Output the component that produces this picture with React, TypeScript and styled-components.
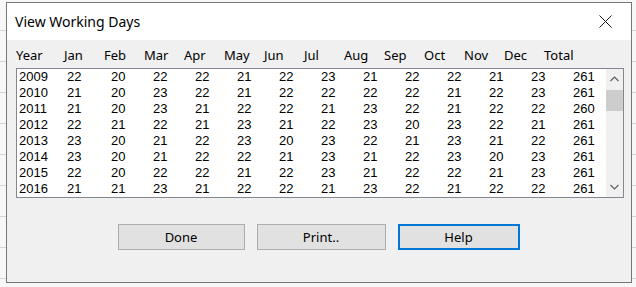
import styled, { createGlobalStyle } from "styled-components"

const GlobalStyle = createGlobalStyle`
  body {
    margin: 0;
    background: #ffffff;
    overflow: hidden;
  }
`

const years = [
  { year: 2009, days: [22, 20, 22, 22, 21, 22, 23, 21, 22, 22, 21, 23], total: 261 },
  { year: 2010, days: [21, 20, 23, 22, 21, 22, 22, 22, 22, 21, 22, 23], total: 261 },
  { year: 2011, days: [21, 20, 23, 21, 22, 22, 21, 23, 22, 21, 22, 22], total: 260 },
  { year: 2012, days: [22, 21, 22, 21, 23, 21, 22, 23, 20, 23, 22, 21], total: 261 },
  { year: 2013, days: [23, 20, 21, 22, 23, 20, 23, 22, 21, 23, 21, 22], total: 261 },
  { year: 2014, days: [23, 20, 21, 22, 22, 21, 23, 21, 22, 23, 20, 23], total: 261 },
  { year: 2015, days: [22, 20, 22, 22, 21, 22, 23, 21, 22, 22, 21, 23], total: 261 },
  { year: 2016, days: [21, 21, 23, 21, 22, 22, 21, 23, 22, 21, 22, 22], total: 261 },
]

const heads = ["Year", "Jan", "Feb", "Mar", "Apr", "May", "Jun", "Jul", "Aug", "Sep", "Oct", "Nov", "Dec", "Total"]

const App = () => {
  return (
    <>
      <GlobalStyle />
      <Backdrop>
        <Dialog>
          <TitleBar>
            <Title>View Working Days</Title>
            <CloseButton>
              <svg width="13" height="13" viewBox="0 0 13 13">
                <path d="M0.5 0.5 L12.5 12.5 M12.5 0.5 L0.5 12.5" stroke="#1a1a1a" strokeWidth="1" fill="none" />
              </svg>
            </CloseButton>
          </TitleBar>
          <Body>
            <HeaderRow>
              {heads.map((h) => <span key={h}>{h}</span>)}
            </HeaderRow>
            <ListBox>
              <Rows>
                {years.map((r) => (
                  <Row key={r.year}>
                    <span>{r.year}</span>
                    {r.days.map((d, i) => <span key={i}>{d}</span>)}
                    <span>{r.total}</span>
                  </Row>
                ))}
              </Rows>
              <ScrollBar>
                <ArrowButton>
                  <svg width="9" height="6" viewBox="0 0 9 6">
                    <path d="M0.5 5 L4.5 1 L8.5 5" stroke="#606060" strokeWidth="1.2" fill="none" />
                  </svg>
                </ArrowButton>
                <Thumb />
                <Track />
                <ArrowButton>
                  <svg width="9" height="6" viewBox="0 0 9 6">
                    <path d="M0.5 1 L4.5 5 L8.5 1" stroke="#606060" strokeWidth="1.2" fill="none" />
                  </svg>
                </ArrowButton>
              </ScrollBar>
            </ListBox>
            <ButtonRow>
              <Button $w={127}>Done</Button>
              <Button $w={129}>Print..</Button>
              <Button $w={122} $focused>Help</Button>
            </ButtonRow>
          </Body>
        </Dialog>
      </Backdrop>
    </>
  )
}

const Backdrop = styled.div`
  width: 636px;
  height: 287px;
  box-sizing: border-box;
  padding: 2px 4px 4px 6px;
  background-color: #f7f7f7;
  background-image: repeating-linear-gradient(
    to bottom,
    transparent 0,
    transparent 30px,
    #d4d4d4 30px,
    #d4d4d4 31px
  );
`

const Dialog = styled.div`
  width: 626px;
  height: 281px;
  box-sizing: border-box;
  border: 1px solid #767676;
  display: flex;
  flex-direction: column;
  background: #f0f0f0;
`

const TitleBar = styled.div`
  height: 37px;
  background: #ffffff;
  display: flex;
  align-items: center;
  justify-content: space-between;
  padding-left: 8px;
`

const Title = styled.div`
  font-family: "Noto Sans", "Open Sans", sans-serif;
  font-size: 14px;
  color: #000;
`

const CloseButton = styled.div`
  width: 46px;
  height: 37px;
  display: flex;
  align-items: center;
  justify-content: center;
  margin-right: 3px;
`

const Body = styled.div`
  flex: 1;
  display: flex;
  flex-direction: column;
  padding: 0 8px 0 9px;
`

const HeaderRow = styled.div`
  display: grid;
  grid-template-columns: 48px repeat(12, 40px) auto;
  height: 28px;
  align-items: center;
  font-family: "Noto Sans", "Open Sans", sans-serif;
  font-size: 13px;
  color: #000;
  padding-top: 1px;
  box-sizing: border-box;
`

const ListBox = styled.div`
  width: 608px;
  height: 130px;
  box-sizing: border-box;
  border: 1px solid #828790;
  background: #ffffff;
  display: flex;
`

const Rows = styled.div`
  flex: 1;
  padding-left: 2px;
  display: flex;
  flex-direction: column;
`

const Row = styled.div`
  display: grid;
  grid-template-columns: 48px 44px repeat(11, 42px) auto;
  height: 16px;
  line-height: 16px;
  font-family: "Liberation Sans", Arial, sans-serif;
  font-size: 13px;
  color: #000;
`

const ScrollBar = styled.div`
  width: 17px;
  background: #f0f0f0;
  display: flex;
  flex-direction: column;
`

const ArrowButton = styled.div`
  height: 20px;
  display: flex;
  align-items: center;
  justify-content: center;
`

const Thumb = styled.div`
  height: 21px;
  margin-top: 1px;
  background: #cdcdcd;
`

const Track = styled.div`
  flex: 1;
`

const ButtonRow = styled.div`
  display: flex;
  justify-content: center;
  gap: 12px;
  margin-top: 26px;
  padding-right: 2px;
`

const Button = styled.div<{ $w: number; $focused?: boolean }>`
  width: ${(p) => p.$w}px;
  height: 26px;
  box-sizing: border-box;
  background: #e1e1e1;
  border: ${(p) => (p.$focused ? "2px solid #0078d7" : "1px solid #adadad")};
  display: flex;
  align-items: center;
  justify-content: center;
  font-family: "Noto Sans", "Open Sans", sans-serif;
  font-size: 13px;
  color: #000;
`

export default App
